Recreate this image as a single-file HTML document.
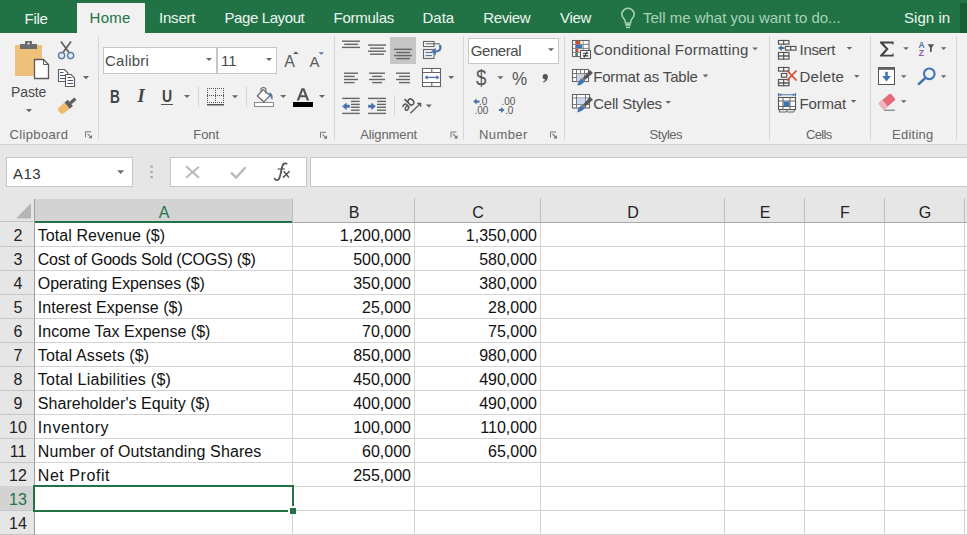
<!DOCTYPE html><html><head><meta charset="utf-8"><style>
html,body{margin:0;padding:0;width:967px;height:535px;overflow:hidden;background:#fff;position:relative}
.t{position:absolute;white-space:pre;font-family:"Liberation Sans",sans-serif}
.r{position:absolute;display:block}
</style></head><body>
<div class="r" style="left:0px;top:0px;width:967px;height:33px;background:#217346;"></div>
<div class="r" style="left:77px;top:3px;width:68px;height:30px;background:#f1f1f1;"></div>
<div class="t" style="left:24.6px;top:10px;font-size:15px;line-height:17px;color:#eef6f1;font-weight:400;font-family:'Liberation Sans';letter-spacing:-0.333px;">File</div>
<div class="t" style="left:89.6px;top:9px;font-size:15px;line-height:17px;color:#217346;font-weight:400;font-family:'Liberation Sans';letter-spacing:0.233px;">Home</div>
<div class="t" style="left:159px;top:9px;font-size:15px;line-height:17px;color:#eef6f1;font-weight:400;font-family:'Liberation Sans';letter-spacing:-0.2px;">Insert</div>
<div class="t" style="left:224.5px;top:9px;font-size:15px;line-height:17px;color:#eef6f1;font-weight:400;font-family:'Liberation Sans';letter-spacing:-0.4px;">Page Layout</div>
<div class="t" style="left:333.6px;top:9px;font-size:15px;line-height:17px;color:#eef6f1;font-weight:400;font-family:'Liberation Sans';letter-spacing:-0.271px;">Formulas</div>
<div class="t" style="left:422.5px;top:9px;font-size:15px;line-height:17px;color:#eef6f1;font-weight:400;font-family:'Liberation Sans';">Data</div>
<div class="t" style="left:483.2px;top:9px;font-size:15px;line-height:17px;color:#eef6f1;font-weight:400;font-family:'Liberation Sans';letter-spacing:-0.35px;">Review</div>
<div class="t" style="left:560px;top:9px;font-size:15px;line-height:17px;color:#eef6f1;font-weight:400;font-family:'Liberation Sans';letter-spacing:-0.333px;">View</div>
<div class="t" style="left:643px;top:9px;font-size:15px;line-height:17px;color:#a8d2b6;font-weight:400;font-family:'Liberation Sans';">Tell me what you want to do...</div>
<div class="t" style="left:904px;top:9px;font-size:15px;line-height:17px;color:#eef6f1;font-weight:400;font-family:'Liberation Sans';letter-spacing:0.05px;">Sign in</div>
<div class="r" style="left:960px;top:3px;width:7px;height:30px;background:#175e35;"></div>
<svg class="r" style="left:615px;top:5px" width="30" height="26"><path d="M10.5,18 Q10.5,15.5 9,13.8 Q6.8,11.5 6.8,9.5 A6.2,6.2 0 0 1 19.2,9.5 Q19.2,11.5 17,13.8 Q15.5,15.5 15.5,18 Z" fill="none" stroke="#a8d2b6" stroke-width="1.5"/><rect x="10.3" y="18.8" width="5.4" height="2" fill="#a8d2b6"/><rect x="11" y="21.6" width="4" height="1.6" fill="#a8d2b6"/></svg>
<div class="r" style="left:0px;top:33px;width:967px;height:111px;background:#f1f1f1;"></div>
<div class="r" style="left:0px;top:144px;width:967px;height:1px;background:#d4d4d4;"></div>
<div class="r" style="left:98px;top:36px;width:1px;height:104px;background:#d6d6d6;"></div>
<div class="r" style="left:334px;top:36px;width:1px;height:104px;background:#d6d6d6;"></div>
<div class="r" style="left:463px;top:36px;width:1px;height:104px;background:#d6d6d6;"></div>
<div class="r" style="left:564px;top:36px;width:1px;height:104px;background:#d6d6d6;"></div>
<div class="r" style="left:769px;top:36px;width:1px;height:104px;background:#d6d6d6;"></div>
<div class="r" style="left:870px;top:36px;width:1px;height:104px;background:#d6d6d6;"></div>
<div class="r" style="left:956px;top:36px;width:1px;height:104px;background:#d6d6d6;"></div>
<div class="t" style="left:9.5px;top:127px;font-size:13px;line-height:15px;color:#666666;font-weight:400;font-family:'Liberation Sans';letter-spacing:0.36px;">Clipboard</div>
<div class="t" style="left:193.3px;top:127px;font-size:13px;line-height:15px;color:#666666;font-weight:400;font-family:'Liberation Sans';letter-spacing:-0.1px;">Font</div>
<div class="t" style="left:360.2px;top:127px;font-size:13px;line-height:15px;color:#666666;font-weight:400;font-family:'Liberation Sans';letter-spacing:-0.11px;">Alignment</div>
<div class="t" style="left:479px;top:127px;font-size:13px;line-height:15px;color:#666666;font-weight:400;font-family:'Liberation Sans';letter-spacing:0.4px;">Number</div>
<div class="t" style="left:649.6px;top:127px;font-size:13px;line-height:15px;color:#666666;font-weight:400;font-family:'Liberation Sans';letter-spacing:-0.5px;">Styles</div>
<div class="t" style="left:805.9px;top:127px;font-size:13px;line-height:15px;color:#666666;font-weight:400;font-family:'Liberation Sans';letter-spacing:-0.62px;">Cells</div>
<div class="t" style="left:892px;top:127px;font-size:13px;line-height:15px;color:#666666;font-weight:400;font-family:'Liberation Sans';letter-spacing:0.25px;">Editing</div>
<div class="t" style="left:11px;top:84px;font-size:14px;line-height:16px;color:#4a4a4a;font-weight:400;font-family:'Liberation Sans';letter-spacing:-0.1px;">Paste</div>
<div class="r" style="left:103px;top:47px;width:112px;height:25px;background:#fff;border:1px solid #c6c6c6;"></div>
<div class="r" style="left:217px;top:47px;width:58px;height:25px;background:#fff;border:1px solid #c6c6c6;"></div>
<div class="t" style="left:105px;top:52px;font-size:15px;line-height:17px;color:#4a4a4a;font-weight:400;font-family:'Liberation Sans';letter-spacing:0.233px;">Calibri</div>
<div class="t" style="left:221px;top:52px;font-size:15px;line-height:17px;color:#4a4a4a;font-weight:400;font-family:'Liberation Sans';">11</div>
<div class="r" style="left:468px;top:38px;width:89px;height:24px;background:#fff;border:1px solid #c6c6c6;"></div>
<div class="t" style="left:470.8px;top:42px;font-size:15px;line-height:17px;color:#4a4a4a;font-weight:400;font-family:'Liberation Sans';letter-spacing:-0.433px;">General</div>
<div class="t" style="left:593.2px;top:41px;font-size:15px;line-height:17px;color:#4a4a4a;font-weight:400;font-family:'Liberation Sans';letter-spacing:0.2px;">Conditional Formatting</div>
<div class="t" style="left:593.2px;top:68px;font-size:15px;line-height:17px;color:#4a4a4a;font-weight:400;font-family:'Liberation Sans';letter-spacing:-0.179px;">Format as Table</div>
<div class="t" style="left:593.2px;top:94.5px;font-size:15px;line-height:17px;color:#4a4a4a;font-weight:400;font-family:'Liberation Sans';letter-spacing:-0.2px;">Cell Styles</div>
<div class="t" style="left:799.6px;top:41px;font-size:15px;line-height:17px;color:#4a4a4a;font-weight:400;font-family:'Liberation Sans';letter-spacing:-0.36px;">Insert</div>
<div class="t" style="left:799.6px;top:68px;font-size:15px;line-height:17px;color:#4a4a4a;font-weight:400;font-family:'Liberation Sans';letter-spacing:0.18px;">Delete</div>
<div class="t" style="left:799.6px;top:95px;font-size:15px;line-height:17px;color:#4a4a4a;font-weight:400;font-family:'Liberation Sans';letter-spacing:-0.2px;">Format</div>
<div class="r" style="left:0px;top:145px;width:967px;height:77px;background:#e6e6e6;"></div>
<div class="r" style="left:6px;top:157px;width:125px;height:28px;background:#fff;border:1px solid #c6c6c6;"></div>
<div class="t" style="left:13px;top:165px;font-size:15px;line-height:17px;color:#333;font-weight:400;font-family:'Liberation Sans';letter-spacing:0.5px;">A13</div>
<div class="r" style="left:170px;top:157px;width:135px;height:28px;background:#fff;border:1px solid #c6c6c6;"></div>
<div class="r" style="left:310px;top:157px;width:660px;height:28px;background:#fff;border:1px solid #c6c6c6;border-right:none"></div>
<svg class="r" style="left:0;top:0" width="967" height="200" viewBox="0 0 967 200"><rect x="15" y="45" width="27" height="31" fill="#efc07a"/><rect x="20" y="44" width="17" height="5" fill="#6c6c6c"/><rect x="25" y="41" width="7" height="4" fill="#6c6c6c"/><rect x="27.5" y="42.5" width="2" height="2" fill="#e8e8e8"/><path d="M34.5,59.5 H43.5 L48.5,64.5 V78.5 H34.5 Z" fill="#fff" stroke="#5a5a5a" stroke-width="1.3"/><path d="M43.5,59.5 V64.5 H48.5" fill="none" stroke="#5a5a5a" stroke-width="1"/><polygon points="26,109 32,109 29.0,112.2" fill="#666666"/><path d="M61,41.5 L69,52.5 M71,41.5 L63,52.5" stroke="#5e5e5e" stroke-width="1.7" fill="none"/><circle cx="61.6" cy="55.6" r="3.1" fill="#e4ecf6" stroke="#5b7ba7" stroke-width="1.4"/><circle cx="70.6" cy="55.6" r="3.1" fill="#e4ecf6" stroke="#5b7ba7" stroke-width="1.4"/><path d="M58.5,69.5 H64.5 L68,73 V81.5 H58.5 Z" fill="#fff" stroke="#5a5a5a" stroke-width="1.1"/><path d="M60,72.5 H63.5 M60,75.5 H65 M60,78.5 H65" stroke="#44546a" stroke-width="1"/><path d="M65.5,74.5 H71 L74.5,78 V86.5 H65.5 Z" fill="#fff" stroke="#5a5a5a" stroke-width="1.1"/><path d="M67.5,77.5 H71.5 M67.5,80.5 H73 M67.5,83.5 H73" stroke="#44546a" stroke-width="1"/><polygon points="83,76 89,76 86.0,79.2" fill="#666666"/><g transform="translate(66,106.6) rotate(-40)"><path d="M-8,-3.6 L1.5,-4.2 L1.5,4.2 L-8,3.6 Q-9.5,0 -8,-3.6 Z" fill="#eebb6a"/><rect x="1.5" y="-4" width="4.2" height="8" fill="#5e5e5e"/><rect x="5.7" y="-1.7" width="6.6" height="3.4" fill="#5e5e5e"/></g><polygon points="206,58 212,58 209.0,61" fill="#666666"/><polygon points="266,58 272,58 269.0,61" fill="#666666"/><polygon points="293,54 298.6,54 295.8,51.6" fill="#45566e"/><polygon points="318.6,52.2 324,52.2 321.3,54.8" fill="#4a72a8"/><polygon points="184,95 190,95 187.0,98" fill="#666666"/><rect x="207" y="88" width="1" height="1" fill="#555"/><rect x="209" y="88" width="1" height="1" fill="#555"/><rect x="211" y="88" width="1" height="1" fill="#555"/><rect x="213" y="88" width="1" height="1" fill="#555"/><rect x="215" y="88" width="1" height="1" fill="#555"/><rect x="217" y="88" width="1" height="1" fill="#555"/><rect x="219" y="88" width="1" height="1" fill="#555"/><rect x="221" y="88" width="1" height="1" fill="#555"/><rect x="223" y="88" width="1" height="1" fill="#555"/><rect x="207" y="95" width="1" height="1" fill="#555"/><rect x="209" y="95" width="1" height="1" fill="#555"/><rect x="211" y="95" width="1" height="1" fill="#555"/><rect x="213" y="95" width="1" height="1" fill="#555"/><rect x="215" y="95" width="1" height="1" fill="#555"/><rect x="217" y="95" width="1" height="1" fill="#555"/><rect x="219" y="95" width="1" height="1" fill="#555"/><rect x="221" y="95" width="1" height="1" fill="#555"/><rect x="223" y="95" width="1" height="1" fill="#555"/><rect x="207" y="102" width="1" height="1" fill="#555"/><rect x="209" y="102" width="1" height="1" fill="#555"/><rect x="211" y="102" width="1" height="1" fill="#555"/><rect x="213" y="102" width="1" height="1" fill="#555"/><rect x="215" y="102" width="1" height="1" fill="#555"/><rect x="217" y="102" width="1" height="1" fill="#555"/><rect x="219" y="102" width="1" height="1" fill="#555"/><rect x="221" y="102" width="1" height="1" fill="#555"/><rect x="223" y="102" width="1" height="1" fill="#555"/><rect x="207" y="88" width="1" height="1" fill="#555"/><rect x="207" y="90" width="1" height="1" fill="#555"/><rect x="207" y="92" width="1" height="1" fill="#555"/><rect x="207" y="94" width="1" height="1" fill="#555"/><rect x="207" y="96" width="1" height="1" fill="#555"/><rect x="207" y="98" width="1" height="1" fill="#555"/><rect x="207" y="100" width="1" height="1" fill="#555"/><rect x="207" y="102" width="1" height="1" fill="#555"/><rect x="215" y="88" width="1" height="1" fill="#555"/><rect x="215" y="90" width="1" height="1" fill="#555"/><rect x="215" y="92" width="1" height="1" fill="#555"/><rect x="215" y="94" width="1" height="1" fill="#555"/><rect x="215" y="96" width="1" height="1" fill="#555"/><rect x="215" y="98" width="1" height="1" fill="#555"/><rect x="215" y="100" width="1" height="1" fill="#555"/><rect x="215" y="102" width="1" height="1" fill="#555"/><rect x="223" y="88" width="1" height="1" fill="#555"/><rect x="223" y="90" width="1" height="1" fill="#555"/><rect x="223" y="92" width="1" height="1" fill="#555"/><rect x="223" y="94" width="1" height="1" fill="#555"/><rect x="223" y="96" width="1" height="1" fill="#555"/><rect x="223" y="98" width="1" height="1" fill="#555"/><rect x="223" y="100" width="1" height="1" fill="#555"/><rect x="223" y="102" width="1" height="1" fill="#555"/><rect x="207" y="104" width="17" height="1.5" fill="#555"/><polygon points="232,95.3 238,95.3 235.0,98.3" fill="#666666"/><path d="M257.3,96 L263.2,89.6 L270,95.6 L263.8,101.8 Z" fill="#fff" stroke="#666" stroke-width="1.2"/><path d="M261,91.5 V88.6 Q263.4,86.4 265.8,88.6 V93.5" fill="none" stroke="#666" stroke-width="1.1"/><path d="M269.2,92.2 Q273.8,93.6 272.4,100 Q270.6,98.4 270.4,96.2 L269.6,95.2 Z" fill="#4a74ad"/><rect x="254.5" y="102.5" width="19" height="4" fill="#fff" stroke="#8a8a8a" stroke-width="1"/><polygon points="280.2,95 286.2,95 283.2,98" fill="#666666"/><rect x="293" y="102" width="20" height="5" fill="#000"/><polygon points="319,95 325,95 322.0,98" fill="#666666"/><line x1="342" y1="41.2" x2="360" y2="41.2" stroke="#666" stroke-width="1.4"/><line x1="344.2" y1="44.3" x2="358" y2="44.3" stroke="#666" stroke-width="1.4"/><line x1="342" y1="47.4" x2="360" y2="47.4" stroke="#666" stroke-width="1.4"/><line x1="368" y1="45.1" x2="386" y2="45.1" stroke="#666" stroke-width="1.4"/><line x1="370" y1="48.2" x2="384" y2="48.2" stroke="#666" stroke-width="1.4"/><line x1="368" y1="51.2" x2="386" y2="51.2" stroke="#666" stroke-width="1.4"/><line x1="370" y1="54.2" x2="384" y2="54.2" stroke="#666" stroke-width="1.4"/><rect x="390" y="37" width="26" height="27" fill="#c6c6c6"/><line x1="394" y1="49.3" x2="411.8" y2="49.3" stroke="#666" stroke-width="1.4"/><line x1="396.3" y1="52.5" x2="410" y2="52.5" stroke="#666" stroke-width="1.4"/><line x1="394" y1="55.6" x2="411.8" y2="55.6" stroke="#666" stroke-width="1.4"/><line x1="396.3" y1="58.6" x2="410" y2="58.6" stroke="#666" stroke-width="1.4"/><rect x="423.5" y="41.5" width="10.5" height="5" fill="#fff" stroke="#666" stroke-width="1.1"/><line x1="425.5" y1="43.8" x2="440" y2="43.8" stroke="#666" stroke-width="1.1"/><rect x="423.5" y="49.5" width="10.5" height="9" fill="none" stroke="#666" stroke-width="1.1"/><line x1="425.5" y1="52.5" x2="432" y2="52.5" stroke="#4a72a8" stroke-width="1.1"/><line x1="425.5" y1="55.6" x2="432" y2="55.6" stroke="#4a72a8" stroke-width="1.1"/><path d="M440,45 Q442,51.5 435,51.6" fill="none" stroke="#4a72a8" stroke-width="2.4"/><polygon points="431.2,51.6 435.8,47.8 435.8,55.4" fill="#4a72a8"/><line x1="344" y1="73.2" x2="358" y2="73.2" stroke="#666" stroke-width="1.4"/><line x1="344" y1="76.4" x2="354.6" y2="76.4" stroke="#666" stroke-width="1.4"/><line x1="344" y1="79.5" x2="358" y2="79.5" stroke="#666" stroke-width="1.4"/><line x1="344" y1="82.6" x2="354.6" y2="82.6" stroke="#666" stroke-width="1.4"/><line x1="369" y1="73.2" x2="385" y2="73.2" stroke="#666" stroke-width="1.4"/><line x1="372.2" y1="76.4" x2="382" y2="76.4" stroke="#666" stroke-width="1.4"/><line x1="369" y1="79.5" x2="385" y2="79.5" stroke="#666" stroke-width="1.4"/><line x1="372.2" y1="82.6" x2="382" y2="82.6" stroke="#666" stroke-width="1.4"/><line x1="396" y1="73.2" x2="410" y2="73.2" stroke="#666" stroke-width="1.4"/><line x1="399" y1="76.4" x2="410" y2="76.4" stroke="#666" stroke-width="1.4"/><line x1="396" y1="79.5" x2="410" y2="79.5" stroke="#666" stroke-width="1.4"/><line x1="399" y1="82.6" x2="410" y2="82.6" stroke="#666" stroke-width="1.4"/><rect x="422.5" y="68.5" width="18" height="18" fill="#fff" stroke="#666" stroke-width="1.1"/><line x1="422.5" y1="72.5" x2="440.5" y2="72.5" stroke="#666" stroke-width="1"/><line x1="422.5" y1="82.5" x2="440.5" y2="82.5" stroke="#666" stroke-width="1"/><line x1="431.8" y1="68.5" x2="431.8" y2="72.2" stroke="#666" stroke-width="1.1"/><line x1="431.8" y1="82.6" x2="431.8" y2="86.5" stroke="#666" stroke-width="1.1"/><line x1="426" y1="77.4" x2="438" y2="77.4" stroke="#4a72a8" stroke-width="1.3"/><polygon points="424.5,77.4 427.5,75 427.5,79.8" fill="#4a72a8"/><polygon points="439.5,77.4 436.5,75 436.5,79.8" fill="#4a72a8"/><polygon points="448.2,76 454.2,76 451.2,79" fill="#666666"/><line x1="342.2" y1="98.4" x2="359.7" y2="98.4" stroke="#666" stroke-width="1.4"/><line x1="368" y1="98.4" x2="386" y2="98.4" stroke="#666" stroke-width="1.4"/><line x1="342.2" y1="113.4" x2="359.7" y2="113.4" stroke="#666" stroke-width="1.4"/><line x1="368" y1="113.4" x2="386" y2="113.4" stroke="#666" stroke-width="1.4"/><line x1="351" y1="101.4" x2="359.7" y2="101.4" stroke="#666" stroke-width="1.4"/><line x1="377" y1="101.4" x2="386" y2="101.4" stroke="#666" stroke-width="1.4"/><line x1="351" y1="104.4" x2="359.7" y2="104.4" stroke="#666" stroke-width="1.4"/><line x1="377" y1="104.4" x2="386" y2="104.4" stroke="#666" stroke-width="1.4"/><line x1="351" y1="107.3" x2="359.7" y2="107.3" stroke="#666" stroke-width="1.4"/><line x1="377" y1="107.3" x2="386" y2="107.3" stroke="#666" stroke-width="1.4"/><line x1="351" y1="110.2" x2="359.7" y2="110.2" stroke="#666" stroke-width="1.4"/><line x1="377" y1="110.2" x2="386" y2="110.2" stroke="#666" stroke-width="1.4"/><path d="M342.2,106.3 L346.6,102.4 L346.6,104.8 L349.8,104.8 L349.8,107.8 L346.6,107.8 L346.6,110.2 Z" fill="#4a72a8"/><path d="M375.8,106.3 L371.4,102.4 L371.4,104.8 L368.2,104.8 L368.2,107.8 L371.4,107.8 L371.4,110.2 Z" fill="#4a72a8"/><g transform="translate(405.6,111.4) rotate(-45) scale(1.1)" fill="none" stroke="#555" stroke-width="1.35"><path d="M1,-4.6 Q2.5,-5.8 4,-5.2 Q5,-4.8 5,-3.5 V0 M5,-2.6 Q2,-3 1,-1.6 Q0.6,0.3 2.6,0.3 Q4.4,0.2 5,-1.5"/><path d="M7.2,-8.6 V0 M7.2,-3 Q7.2,-5.6 9.5,-5.6 Q11.8,-5.6 11.8,-2.7 Q11.8,0.3 9.4,0.3 Q7.2,0.3 7.2,-2.7"/></g><line x1="410.3" y1="113.2" x2="420.4" y2="103.6" stroke="#555" stroke-width="1.3"/><polyline points="417.2,103.5 420.6,103.4 420.6,106.8" fill="none" stroke="#555" stroke-width="1.3"/><polygon points="425.8,104.4 431.8,104.4 428.8,107.4" fill="#666666"/><polygon points="548,48.3 554,48.3 551.0,51.3" fill="#666666"/><polygon points="497.4,76.2 503.4,76.2 500.4,79.2" fill="#666666"/><path d="M542.6,77.3 Q542.6,74 545.3,74 Q547.9,74 547.9,77 Q547.9,80.5 543.6,82.6 L543,81.6 Q545.2,80.2 545.5,79.4 Q542.6,79.6 542.6,77.3 Z" fill="#555"/><path d="M473.2,101.6 L476.6,98.6 V100.5 H479.5 V102.7 H476.6 V104.6 Z" fill="#4a72a8"/><path d="M504.5,110 L501.1,107 V108.9 H498.8 V111.1 H501.1 V113 Z" fill="#4a72a8"/><rect x="572.5" y="40.5" width="16.5" height="16" fill="#fff" stroke="#666" stroke-width="1.1"/><rect x="575.8" y="41" width="4.5" height="3.3" fill="#d04a2a"/><rect x="575.8" y="44.8" width="6.5" height="3.3" fill="#3f73b4"/><rect x="575.8" y="48.8" width="2.6" height="3.3" fill="#d04a2a"/><rect x="575.8" y="52.6" width="2" height="3.6" fill="#3c7a8a"/><line x1="572.5" y1="44.4" x2="589" y2="44.4" stroke="#666" stroke-width="0.8"/><line x1="572.5" y1="48.4" x2="589" y2="48.4" stroke="#666" stroke-width="0.8"/><line x1="572.5" y1="52.4" x2="589" y2="52.4" stroke="#666" stroke-width="0.8"/><line x1="575.6" y1="40.5" x2="575.6" y2="56.5" stroke="#777" stroke-width="0.8"/><line x1="583.2" y1="40.5" x2="583.2" y2="56.5" stroke="#777" stroke-width="0.8"/><rect x="580.5" y="50.5" width="10" height="8" fill="#fff" stroke="#555" stroke-width="1.1"/><path d="M582.8,53.3 H588.3 M582.8,55.9 H588.3 M587.2,51.6 L584,57.6" stroke="#333" stroke-width="1.1"/><polygon points="752.3,47.4 757.9,47.4 755.0999999999999,50.199999999999996" fill="#666666"/><rect x="572.5" y="69.5" width="16" height="12" fill="#fff" stroke="#666" stroke-width="1.1"/><line x1="576.5" y1="69.5" x2="576.5" y2="81.5" stroke="#666" stroke-width="0.8800000000000001"/><line x1="580.5" y1="69.5" x2="580.5" y2="81.5" stroke="#666" stroke-width="0.8800000000000001"/><line x1="584.5" y1="69.5" x2="584.5" y2="81.5" stroke="#666" stroke-width="0.8800000000000001"/><line x1="572.5" y1="73.5" x2="588.5" y2="73.5" stroke="#666" stroke-width="0.8800000000000001"/><line x1="572.5" y1="77.5" x2="588.5" y2="77.5" stroke="#666" stroke-width="0.8800000000000001"/><rect x="576.8" y="73.8" width="7.5" height="7.5" fill="#c9d3de"/><g transform="translate(577.3,85.6) rotate(-45)"><path d="M0,0 Q3,-2.6 8,-2.4 L8,2.4 Q3,2.6 0,0 Z" fill="#3f74b5"/><rect x="8" y="-1.8" width="2.2" height="3.6" fill="#777"/><path d="M10.2,-1.5 L20,-2.1 L20,2.1 L10.2,1.5 Z" fill="#555"/></g><polygon points="702.7,74.6 708.3000000000001,74.6 705.5,77.39999999999999" fill="#666666"/><rect x="572.5" y="94.5" width="17" height="13.5" fill="#fff" stroke="#666" stroke-width="1.1"/><line x1="576.5" y1="94.5" x2="576.5" y2="108.0" stroke="#666" stroke-width="0.8800000000000001"/><line x1="585.5" y1="94.5" x2="585.5" y2="108.0" stroke="#666" stroke-width="0.8800000000000001"/><line x1="572.5" y1="98" x2="589.5" y2="98" stroke="#666" stroke-width="0.8800000000000001"/><line x1="572.5" y1="104.5" x2="589.5" y2="104.5" stroke="#666" stroke-width="0.8800000000000001"/><rect x="577" y="98.4" width="8.2" height="5.8" fill="#c9daf0"/><g transform="translate(577.3,112.4) rotate(-45)"><path d="M0,0 Q3,-2.6 8,-2.4 L8,2.4 Q3,2.6 0,0 Z" fill="#3f74b5"/><rect x="8" y="-1.8" width="2.2" height="3.6" fill="#777"/><path d="M10.2,-1.5 L20,-2.1 L20,2.1 L10.2,1.5 Z" fill="#555"/></g><polygon points="665.4,101 671.0,101 668.1999999999999,103.8" fill="#666666"/><rect x="778.5" y="40.5" width="5.2" height="3.6" fill="#fff" stroke="#555" stroke-width="1.2"/><rect x="783.7" y="40.5" width="5.2" height="3.6" fill="#fff" stroke="#555" stroke-width="1.2"/><path d="M778,48 L781.8,45 V47 H784.5 V49 H781.8 V51 Z" fill="#4a72a8"/><rect x="785.5" y="46.5" width="5.2" height="3.6" fill="#fff" stroke="#555" stroke-width="1.2"/><rect x="790.7" y="46.5" width="5.2" height="3.6" fill="#fff" stroke="#555" stroke-width="1.2"/><rect x="778.5" y="52.5" width="5.2" height="3.6" fill="#fff" stroke="#555" stroke-width="1.2"/><rect x="783.7" y="52.5" width="5.2" height="3.6" fill="#fff" stroke="#555" stroke-width="1.2"/><rect x="778.5" y="56.1" width="5.2" height="3" fill="#fff" stroke="#555" stroke-width="1.2"/><rect x="783.7" y="56.1" width="5.2" height="3" fill="#fff" stroke="#555" stroke-width="1.2"/><polygon points="846.6,47 852.2,47 849.4,49.8" fill="#666666"/><rect x="778.5" y="67.5" width="5.2" height="3.6" fill="#fff" stroke="#555" stroke-width="1.2"/><rect x="783.7" y="67.5" width="5.2" height="3.6" fill="#fff" stroke="#555" stroke-width="1.2"/><rect x="781.5" y="73.5" width="5.2" height="3.6" fill="#fff" stroke="#555" stroke-width="1.2"/><rect x="778.5" y="79.5" width="5.2" height="3.6" fill="#fff" stroke="#555" stroke-width="1.2"/><rect x="783.7" y="79.5" width="5.2" height="3.6" fill="#fff" stroke="#555" stroke-width="1.2"/><rect x="778.5" y="83.1" width="5.2" height="2.6" fill="#fff" stroke="#555" stroke-width="1.2"/><rect x="783.7" y="83.1" width="5.2" height="2.6" fill="#fff" stroke="#555" stroke-width="1.2"/><path d="M787,70.5 L796.5,80.5 M796.5,70.5 L787,80.5" stroke="#d24d2c" stroke-width="1.8"/><polygon points="854,75 859.6,75 856.8,77.8" fill="#666666"/><path d="M778.5,93 V96.5 M795.5,93 V96.5 M779,94.8 H795" stroke="#4a72a8" stroke-width="1.1"/><polygon points="779,94.8 781.2,93.3 781.2,96.3" fill="#4a72a8"/><polygon points="795,94.8 792.8,93.3 792.8,96.3" fill="#4a72a8"/><rect x="778.5" y="97.5" width="17" height="12" fill="#fff" stroke="#555" stroke-width="1.1"/><line x1="783" y1="97.5" x2="783" y2="109.5" stroke="#555" stroke-width="0.8800000000000001"/><line x1="790" y1="97.5" x2="790" y2="109.5" stroke="#555" stroke-width="0.8800000000000001"/><line x1="778.5" y1="101" x2="795.5" y2="101" stroke="#555" stroke-width="0.8800000000000001"/><line x1="778.5" y1="106.5" x2="795.5" y2="106.5" stroke="#555" stroke-width="0.8800000000000001"/><rect x="783.6" y="101.6" width="6" height="4.6" fill="#3f6fae"/><path d="M779.5,109.5 V112 H786 L787.5,110.5 M787.5,112 H793.5 L795,109.5" fill="none" stroke="#666" stroke-width="1.1"/><polygon points="850.8,100 856.4,100 853.5999999999999,102.8" fill="#666666"/><path d="M880,41.6 H893.6 V44.6 H892.4 V43.4 H883.6 L888.6,49 L883.6,54.8 H892.4 V53.6 H893.6 V56.6 H880 V55.2 L885.8,49 L880,43 Z" fill="#444"/><polygon points="903.2,47.2 908.8000000000001,47.2 906.0,50.0" fill="#666666"/><text x="918.6" y="47.6" font-family="Liberation Sans" font-weight="bold" font-size="8.5" fill="#4a72a8">A</text><text x="918.8" y="55.8" font-family="Liberation Sans" font-weight="bold" font-size="8.5" fill="#8e5aa8">Z</text><polygon points="927.6,44.2 934.2,44.2 931.8,47.6 931.8,51.4 930,52.2 930,47.6" fill="#555"/><polygon points="940.8,47.2 946.4,47.2 943.5999999999999,50.0" fill="#666666"/><rect x="878.5" y="67.5" width="16" height="17" fill="#fff" stroke="#555" stroke-width="1"/><line x1="878.5" y1="68.8" x2="894.5" y2="68.8" stroke="#666" stroke-width="2.2"/><path d="M886.5,71.8 V77.5" fill="none" stroke="#3f73b4" stroke-width="2.6"/><polygon points="882.2,76 890.8,76 886.5,81.6" fill="#3f73b4"/><polygon points="901,75.2 906.6,75.2 903.8,78.0" fill="#666666"/><circle cx="929.3" cy="73.8" r="5.3" fill="none" stroke="#3f73b4" stroke-width="2.1"/><line x1="925.5" y1="77.8" x2="918.8" y2="84" stroke="#3f73b4" stroke-width="2.4" stroke-linecap="round"/><polygon points="940.8,75.2 946.4,75.2 943.5999999999999,78.0" fill="#666666"/><g transform="translate(887,101.5) rotate(-40)"><rect x="-8" y="-4.2" width="16" height="8.4" rx="1.5" fill="#e46a7a"/><rect x="-8" y="-4.2" width="5.5" height="8.4" rx="1.2" fill="#f3b6bf"/></g><line x1="884" y1="110.2" x2="895" y2="110.2" stroke="#666" stroke-width="1"/><polygon points="901,100.2 906.6,100.2 903.8,103.0" fill="#666666"/><path d="M85.5,137.3 V131.8 H91" fill="none" stroke="#777" stroke-width="1"/><path d="M87.5,133.8 L91.5,137.8" stroke="#777" stroke-width="1.1"/><polygon points="92,134.8 92,138.3 88.5,138.3" fill="#777"/><path d="M320.5,137.8 V132.3 H326" fill="none" stroke="#777" stroke-width="1"/><path d="M322.5,134.3 L326.5,138.3" stroke="#777" stroke-width="1.1"/><polygon points="327,135.3 327,138.8 323.5,138.8" fill="#777"/><path d="M451.0,137.5 V132.0 H456.5" fill="none" stroke="#777" stroke-width="1"/><path d="M453.0,134.0 L457.0,138.0" stroke="#777" stroke-width="1.1"/><polygon points="457.5,135.0 457.5,138.5 454.0,138.5" fill="#777"/><path d="M550.5,137.5 V132.0 H556" fill="none" stroke="#777" stroke-width="1"/><path d="M552.5,134.0 L556.5,138.0" stroke="#777" stroke-width="1.1"/><polygon points="557,135.0 557,138.5 553.5,138.5" fill="#777"/><path d="M186,166.2 L199,177.8 M199,166.8 L186,177.8" stroke="#b8b8b8" stroke-width="1.9"/><path d="M231,172.6 L236.2,177.6 L245.5,167.2" fill="none" stroke="#b8b8b8" stroke-width="2.3"/><polygon points="117.2,170.2 124.2,170.2 120.7,174.0" fill="#707070"/><rect x="150.5" y="165.5" width="2.2" height="2.2" fill="#a4a4a4"/><rect x="150.5" y="170.8" width="2.2" height="2.2" fill="#a4a4a4"/><rect x="150.5" y="176" width="2.2" height="2.2" fill="#a4a4a4"/></svg>
<div class="r" style="left:198px;top:86px;width:1px;height:21px;background:#d6d6d6;"></div>
<div class="r" style="left:246px;top:86px;width:1px;height:21px;background:#d6d6d6;"></div>
<div class="r" style="left:394px;top:95px;width:1px;height:21px;background:#d6d6d6;"></div>
<div class="t" style="left:284.3px;top:52.5px;font-size:16px;line-height:17px;color:#5a5a5a;font-weight:400;font-family:'Liberation Sans';">A</div>
<div class="t" style="left:309.6px;top:53.3px;font-size:15px;line-height:17px;color:#5a5a5a;font-weight:400;font-family:'Liberation Sans';">A</div>
<div class="t" style="left:110px;top:86.5px;font-size:18px;line-height:20px;color:#444;font-weight:700;transform:scaleX(0.76);transform-origin:0 0">B</div>
<div class="t" style="left:137.5px;top:86px;font-size:18.5px;line-height:20px;color:#444;font-weight:700;font-style:italic;font-family:'Liberation Serif'">I</div>
<div class="t" style="left:161.5px;top:86px;font-size:16.5px;line-height:20px;color:#444;font-weight:700;transform:scaleX(0.85);transform-origin:0 0">U</div>
<div class="r" style="left:160.5px;top:103.5px;width:12.5px;height:1.3px;background:#555;"></div>
<svg class="r" style="left:0;top:0" width="967" height="200"><path fill-rule="evenodd" d="M296.7,100.5 L301.5,88.2 H304.4 L309.2,100.5 H306.8 L305.6,97.3 H300.3 L299.1,100.5 Z M301.1,95.3 H304.8 L302.95,90.2 Z" fill="#555"/></svg>
<div class="t" style="left:475.5px;top:64.5px;font-size:22px;line-height:25px;color:#555;font-weight:400;font-family:'Liberation Sans';transform:scaleX(0.85);transform-origin:0 0">$</div>
<div class="t" style="left:511.5px;top:68px;font-size:19px;line-height:21px;color:#555;font-weight:400;font-family:'Liberation Sans';transform:scaleX(0.9);transform-origin:0 0">%</div>
<div class="t" style="left:479px;top:96px;font-size:10px;line-height:11px;color:#555;font-weight:400;font-family:'Liberation Sans';">.0</div>
<div class="t" style="left:474.5px;top:105px;font-size:10px;line-height:11px;color:#555;font-weight:400;font-family:'Liberation Sans';">.00</div>
<div class="t" style="left:501.5px;top:96px;font-size:10px;line-height:11px;color:#555;font-weight:400;font-family:'Liberation Sans';">.00</div>
<div class="t" style="left:505px;top:105px;font-size:10px;line-height:11px;color:#555;font-weight:400;font-family:'Liberation Sans';">.0</div>
<svg class="r" style="left:0;top:0" width="967" height="200"><path d="M274.6,178.6 Q276.2,181.2 278.6,179.4 Q280,177.6 281.2,171 L282.4,166 Q283.6,162.4 286.6,163.6" fill="none" stroke="#555" stroke-width="1.8" stroke-linecap="round"/><line x1="277.6" y1="169" x2="284.8" y2="169" stroke="#555" stroke-width="1.2"/><path d="M283.8,171.2 L289,177.6 M289.6,171.2 L283,177.6" stroke="#555" stroke-width="1.5"/></svg>
<div class="r" style="left:0px;top:187px;width:967px;height:35px;background:#e6e6e6;"></div>
<div class="r" style="left:35px;top:222px;width:932px;height:313px;background:#ffffff;"></div>
<div class="r" style="left:0px;top:222px;width:34px;height:313px;background:#e6e6e6;"></div>
<div class="r" style="left:292px;top:198px;width:1px;height:24px;background:#bdbdbd;"></div>
<div class="r" style="left:414px;top:198px;width:1px;height:24px;background:#bdbdbd;"></div>
<div class="r" style="left:540px;top:198px;width:1px;height:24px;background:#bdbdbd;"></div>
<div class="r" style="left:724px;top:198px;width:1px;height:24px;background:#bdbdbd;"></div>
<div class="r" style="left:804px;top:198px;width:1px;height:24px;background:#bdbdbd;"></div>
<div class="r" style="left:884px;top:198px;width:1px;height:24px;background:#bdbdbd;"></div>
<div class="r" style="left:964px;top:198px;width:1px;height:24px;background:#bdbdbd;"></div>
<div class="r" style="left:35px;top:199px;width:257px;height:22px;background:#d3d3d3;"></div>
<div class="r" style="left:34px;top:222px;width:933px;height:1px;background:#a9a9a9;"></div>
<div class="r" style="left:0px;top:221px;width:34px;height:1px;background:#c4c4c4;"></div>
<div class="r" style="left:35px;top:221px;width:257px;height:2px;background:#217346;"></div>
<svg class="r" style="left:14px;top:201px" width="20" height="20"><polygon points="17,2 17,17.5 2,17.5" fill="#b5b5b5"/></svg>
<div class="t" style="left:-36.0px;width:400px;text-align:center;top:204px;font-size:16px;line-height:17px;color:#217346;font-weight:400;font-family:'Liberation Sans';">A</div>
<div class="t" style="left:154.0px;width:400px;text-align:center;top:204px;font-size:16px;line-height:17px;color:#222;font-weight:400;font-family:'Liberation Sans';">B</div>
<div class="t" style="left:278.0px;width:400px;text-align:center;top:204px;font-size:16px;line-height:17px;color:#222;font-weight:400;font-family:'Liberation Sans';">C</div>
<div class="t" style="left:433.0px;width:400px;text-align:center;top:204px;font-size:16px;line-height:17px;color:#222;font-weight:400;font-family:'Liberation Sans';">D</div>
<div class="t" style="left:565.0px;width:400px;text-align:center;top:204px;font-size:16px;line-height:17px;color:#222;font-weight:400;font-family:'Liberation Sans';">E</div>
<div class="t" style="left:645.0px;width:400px;text-align:center;top:204px;font-size:16px;line-height:17px;color:#222;font-weight:400;font-family:'Liberation Sans';">F</div>
<div class="t" style="left:725.0px;width:400px;text-align:center;top:204px;font-size:16px;line-height:17px;color:#222;font-weight:400;font-family:'Liberation Sans';">G</div>
<div class="r" style="left:292px;top:223px;width:1px;height:312px;background:#d2d2d2;"></div>
<div class="r" style="left:414px;top:223px;width:1px;height:312px;background:#d2d2d2;"></div>
<div class="r" style="left:540px;top:223px;width:1px;height:312px;background:#d2d2d2;"></div>
<div class="r" style="left:724px;top:223px;width:1px;height:312px;background:#d2d2d2;"></div>
<div class="r" style="left:804px;top:223px;width:1px;height:312px;background:#d2d2d2;"></div>
<div class="r" style="left:884px;top:223px;width:1px;height:312px;background:#d2d2d2;"></div>
<div class="r" style="left:964px;top:223px;width:1px;height:312px;background:#d2d2d2;"></div>
<div class="r" style="left:35px;top:246px;width:932px;height:1px;background:#d2d2d2;"></div>
<div class="r" style="left:0px;top:246px;width:34px;height:1px;background:#c6c6c6;"></div>
<div class="r" style="left:35px;top:270px;width:932px;height:1px;background:#d2d2d2;"></div>
<div class="r" style="left:0px;top:270px;width:34px;height:1px;background:#c6c6c6;"></div>
<div class="r" style="left:35px;top:294px;width:932px;height:1px;background:#d2d2d2;"></div>
<div class="r" style="left:0px;top:294px;width:34px;height:1px;background:#c6c6c6;"></div>
<div class="r" style="left:35px;top:318px;width:932px;height:1px;background:#d2d2d2;"></div>
<div class="r" style="left:0px;top:318px;width:34px;height:1px;background:#c6c6c6;"></div>
<div class="r" style="left:35px;top:342px;width:932px;height:1px;background:#d2d2d2;"></div>
<div class="r" style="left:0px;top:342px;width:34px;height:1px;background:#c6c6c6;"></div>
<div class="r" style="left:35px;top:366px;width:932px;height:1px;background:#d2d2d2;"></div>
<div class="r" style="left:0px;top:366px;width:34px;height:1px;background:#c6c6c6;"></div>
<div class="r" style="left:35px;top:390px;width:932px;height:1px;background:#d2d2d2;"></div>
<div class="r" style="left:0px;top:390px;width:34px;height:1px;background:#c6c6c6;"></div>
<div class="r" style="left:35px;top:414px;width:932px;height:1px;background:#d2d2d2;"></div>
<div class="r" style="left:0px;top:414px;width:34px;height:1px;background:#c6c6c6;"></div>
<div class="r" style="left:35px;top:438px;width:932px;height:1px;background:#d2d2d2;"></div>
<div class="r" style="left:0px;top:438px;width:34px;height:1px;background:#c6c6c6;"></div>
<div class="r" style="left:35px;top:462px;width:932px;height:1px;background:#d2d2d2;"></div>
<div class="r" style="left:0px;top:462px;width:34px;height:1px;background:#c6c6c6;"></div>
<div class="r" style="left:35px;top:486px;width:932px;height:1px;background:#d2d2d2;"></div>
<div class="r" style="left:0px;top:486px;width:34px;height:1px;background:#c6c6c6;"></div>
<div class="r" style="left:35px;top:510px;width:932px;height:1px;background:#d2d2d2;"></div>
<div class="r" style="left:0px;top:510px;width:34px;height:1px;background:#c6c6c6;"></div>
<div class="r" style="left:35px;top:534px;width:932px;height:1px;background:#d2d2d2;"></div>
<div class="r" style="left:0px;top:534px;width:34px;height:1px;background:#c6c6c6;"></div>
<div class="r" style="left:34px;top:199px;width:1px;height:336px;background:#9e9e9e;"></div>
<div class="r" style="left:0px;top:486px;width:34px;height:24px;background:#d3d3d3;"></div>
<div class="t" style="left:-182px;width:400px;text-align:center;top:227px;font-size:16px;line-height:17px;color:#222;font-weight:400;font-family:'Liberation Sans';">2</div>
<div class="t" style="left:-182px;width:400px;text-align:center;top:251px;font-size:16px;line-height:17px;color:#222;font-weight:400;font-family:'Liberation Sans';">3</div>
<div class="t" style="left:-182px;width:400px;text-align:center;top:275px;font-size:16px;line-height:17px;color:#222;font-weight:400;font-family:'Liberation Sans';">4</div>
<div class="t" style="left:-182px;width:400px;text-align:center;top:299px;font-size:16px;line-height:17px;color:#222;font-weight:400;font-family:'Liberation Sans';">5</div>
<div class="t" style="left:-182px;width:400px;text-align:center;top:323px;font-size:16px;line-height:17px;color:#222;font-weight:400;font-family:'Liberation Sans';">6</div>
<div class="t" style="left:-182px;width:400px;text-align:center;top:347px;font-size:16px;line-height:17px;color:#222;font-weight:400;font-family:'Liberation Sans';">7</div>
<div class="t" style="left:-182px;width:400px;text-align:center;top:371px;font-size:16px;line-height:17px;color:#222;font-weight:400;font-family:'Liberation Sans';">8</div>
<div class="t" style="left:-182px;width:400px;text-align:center;top:395px;font-size:16px;line-height:17px;color:#222;font-weight:400;font-family:'Liberation Sans';">9</div>
<div class="t" style="left:-182px;width:400px;text-align:center;top:419px;font-size:16px;line-height:17px;color:#222;font-weight:400;font-family:'Liberation Sans';">10</div>
<div class="t" style="left:-182px;width:400px;text-align:center;top:443px;font-size:16px;line-height:17px;color:#222;font-weight:400;font-family:'Liberation Sans';">11</div>
<div class="t" style="left:-182px;width:400px;text-align:center;top:467px;font-size:16px;line-height:17px;color:#222;font-weight:400;font-family:'Liberation Sans';">12</div>
<div class="t" style="left:-182px;width:400px;text-align:center;top:491px;font-size:16px;line-height:17px;color:#217346;font-weight:400;font-family:'Liberation Sans';">13</div>
<div class="t" style="left:-182px;width:400px;text-align:center;top:515px;font-size:16px;line-height:17px;color:#222;font-weight:400;font-family:'Liberation Sans';">14</div>
<div class="t" style="left:37.8px;top:227px;font-size:16px;line-height:17px;color:#111;font-weight:400;font-family:'Liberation Sans';letter-spacing:0.062px;">Total Revenue ($)</div>
<div class="t" style="right:556px;top:227px;font-size:16px;line-height:17px;color:#111;font-weight:400;font-family:'Liberation Sans';">1,200,000</div>
<div class="t" style="right:430px;top:227px;font-size:16px;line-height:17px;color:#111;font-weight:400;font-family:'Liberation Sans';">1,350,000</div>
<div class="t" style="left:37.8px;top:251px;font-size:16px;line-height:17px;color:#111;font-weight:400;font-family:'Liberation Sans';letter-spacing:-0.25px;">Cost of Goods Sold (COGS) ($)</div>
<div class="t" style="right:556px;top:251px;font-size:16px;line-height:17px;color:#111;font-weight:400;font-family:'Liberation Sans';">500,000</div>
<div class="t" style="right:430px;top:251px;font-size:16px;line-height:17px;color:#111;font-weight:400;font-family:'Liberation Sans';">580,000</div>
<div class="t" style="left:37.8px;top:275px;font-size:16px;line-height:17px;color:#111;font-weight:400;font-family:'Liberation Sans';letter-spacing:-0.095px;">Operating Expenses ($)</div>
<div class="t" style="right:556px;top:275px;font-size:16px;line-height:17px;color:#111;font-weight:400;font-family:'Liberation Sans';">350,000</div>
<div class="t" style="right:430px;top:275px;font-size:16px;line-height:17px;color:#111;font-weight:400;font-family:'Liberation Sans';">380,000</div>
<div class="t" style="left:37.8px;top:299px;font-size:16px;line-height:17px;color:#111;font-weight:400;font-family:'Liberation Sans';letter-spacing:0.053px;">Interest Expense ($)</div>
<div class="t" style="right:556px;top:299px;font-size:16px;line-height:17px;color:#111;font-weight:400;font-family:'Liberation Sans';">25,000</div>
<div class="t" style="right:430px;top:299px;font-size:16px;line-height:17px;color:#111;font-weight:400;font-family:'Liberation Sans';">28,000</div>
<div class="t" style="left:37.8px;top:323px;font-size:16px;line-height:17px;color:#111;font-weight:400;font-family:'Liberation Sans';letter-spacing:0.02px;">Income Tax Expense ($)</div>
<div class="t" style="right:556px;top:323px;font-size:16px;line-height:17px;color:#111;font-weight:400;font-family:'Liberation Sans';">70,000</div>
<div class="t" style="right:430px;top:323px;font-size:16px;line-height:17px;color:#111;font-weight:400;font-family:'Liberation Sans';">75,000</div>
<div class="t" style="left:37.8px;top:347px;font-size:16px;line-height:17px;color:#111;font-weight:400;font-family:'Liberation Sans';letter-spacing:0.133px;">Total Assets ($)</div>
<div class="t" style="right:556px;top:347px;font-size:16px;line-height:17px;color:#111;font-weight:400;font-family:'Liberation Sans';">850,000</div>
<div class="t" style="right:430px;top:347px;font-size:16px;line-height:17px;color:#111;font-weight:400;font-family:'Liberation Sans';">980,000</div>
<div class="t" style="left:37.8px;top:371px;font-size:16px;line-height:17px;color:#111;font-weight:400;font-family:'Liberation Sans';letter-spacing:0.25px;">Total Liabilities ($)</div>
<div class="t" style="right:556px;top:371px;font-size:16px;line-height:17px;color:#111;font-weight:400;font-family:'Liberation Sans';">450,000</div>
<div class="t" style="right:430px;top:371px;font-size:16px;line-height:17px;color:#111;font-weight:400;font-family:'Liberation Sans';">490,000</div>
<div class="t" style="left:37.8px;top:395px;font-size:16px;line-height:17px;color:#111;font-weight:400;font-family:'Liberation Sans';letter-spacing:0.037px;">Shareholder&#39;s Equity ($)</div>
<div class="t" style="right:556px;top:395px;font-size:16px;line-height:17px;color:#111;font-weight:400;font-family:'Liberation Sans';">400,000</div>
<div class="t" style="right:430px;top:395px;font-size:16px;line-height:17px;color:#111;font-weight:400;font-family:'Liberation Sans';">490,000</div>
<div class="t" style="left:37.8px;top:419px;font-size:16px;line-height:17px;color:#111;font-weight:400;font-family:'Liberation Sans';letter-spacing:0.625px;">Inventory</div>
<div class="t" style="right:556px;top:419px;font-size:16px;line-height:17px;color:#111;font-weight:400;font-family:'Liberation Sans';">100,000</div>
<div class="t" style="right:430px;top:419px;font-size:16px;line-height:17px;color:#111;font-weight:400;font-family:'Liberation Sans';">110,000</div>
<div class="t" style="left:37.8px;top:443px;font-size:16px;line-height:17px;color:#111;font-weight:400;font-family:'Liberation Sans';letter-spacing:0.111px;">Number of Outstanding Shares</div>
<div class="t" style="right:556px;top:443px;font-size:16px;line-height:17px;color:#111;font-weight:400;font-family:'Liberation Sans';">60,000</div>
<div class="t" style="right:430px;top:443px;font-size:16px;line-height:17px;color:#111;font-weight:400;font-family:'Liberation Sans';">65,000</div>
<div class="t" style="left:37.8px;top:467px;font-size:16px;line-height:17px;color:#111;font-weight:400;font-family:'Liberation Sans';letter-spacing:0.556px;">Net Profit</div>
<div class="t" style="right:556px;top:467px;font-size:16px;line-height:17px;color:#111;font-weight:400;font-family:'Liberation Sans';">255,000</div>
<div class="r" style="left:33px;top:485px;width:257px;height:23px;border:2px solid #217346"></div>
<div class="r" style="left:288px;top:506px;width:8px;height:8px;background:#ffffff;"></div>
<div class="r" style="left:290px;top:508px;width:6px;height:6px;background:#217346;"></div>
</body></html>
